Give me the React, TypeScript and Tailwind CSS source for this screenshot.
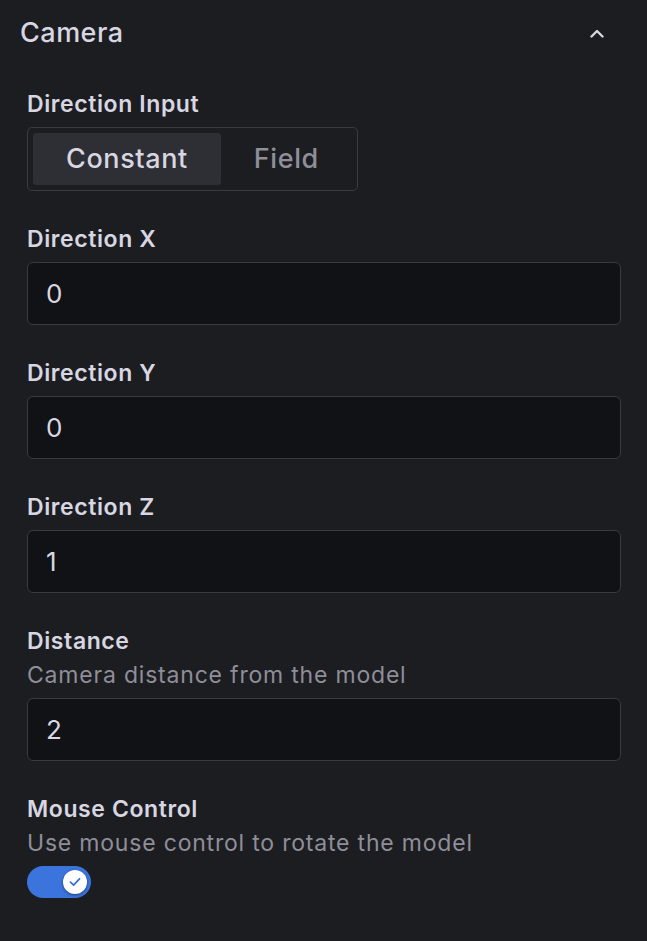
import React, { useState } from 'react';

const labelCls = "block text-[23px] leading-[30px] font-semibold tracking-[0.6px] text-[#d7d6e1]";
const descCls = "mt-1 text-[23px] leading-[30px] tracking-[0.8px] text-[#8f8e99]";

const NumberField: React.FC<{ label: string; value: string; desc?: string }> = ({ label, value, desc }) => (
  <div>
    <div className={labelCls}>{label}</div>
    {desc && <div className={descCls}>{desc}</div>}
    <div className="mt-2 h-[63px] rounded-[6px] border border-[#3a3b41] bg-[#111216] px-[18px] flex items-center">
      <span className="text-[26px] text-[#d9d8e2]">{value}</span>
    </div>
  </div>
);

const App: React.FC = () => {
  const [mode, setMode] = useState<'constant' | 'field'>('constant');
  const [mouse, setMouse] = useState(true);

  return (
    <div className="min-h-screen w-full bg-[#1c1d21] pt-[15px] pb-10" style={{ fontFamily: 'Inter, "Noto Sans", sans-serif' }}>
      <div className="flex items-center justify-between pl-[20px] pr-[43px]">
        <h2 className="text-[27px] leading-[36px] font-medium tracking-[0.5px] text-[#d7d6e1]">Camera</h2>
        <svg width="14" height="9" viewBox="0 0 14 9" fill="none">
          <path d="M1.5 7.5 L7 2 L12.5 7.5" stroke="#d7d6e1" strokeWidth="2.4" strokeLinecap="round" strokeLinejoin="round" />
        </svg>
      </div>

      <div className="mt-[38px] pl-[27px] pr-[26px] flex flex-col gap-[33px]">
        <div>
          <div className={labelCls}>Direction Input</div>
          <div className="mt-2 inline-flex rounded-[5px] border border-[#3a3b41] p-[5px]">
            <button
              onClick={() => setMode('constant')}
              className={`h-[52px] px-[33px] rounded-[3px] text-[27px] font-medium tracking-[0.6px] ${mode === 'constant' ? 'bg-[#2e2f35] text-[#d7d6e1]' : 'text-[#8f8e99]'}`}
            >
              Constant
            </button>
            <button
              onClick={() => setMode('field')}
              className={`h-[52px] px-[33px] rounded-[3px] text-[27px] font-medium tracking-[0.6px] ${mode === 'field' ? 'bg-[#2e2f35] text-[#d7d6e1]' : 'text-[#8f8e99]'}`}
            >
              Field
            </button>
          </div>
        </div>

        <NumberField label="Direction X" value="0" />
        <NumberField label="Direction Y" value="0" />
        <NumberField label="Direction Z" value="1" />
        <NumberField label="Distance" desc="Camera distance from the model" value="2" />

        <div>
          <div className={labelCls}>Mouse Control</div>
          <div className={descCls}>Use mouse control to rotate the model</div>
          <button
            onClick={() => setMouse(!mouse)}
            className={`mt-2 relative block h-[32px] w-[64px] rounded-full ${mouse ? 'bg-[#3b74dc]' : 'bg-[#3a3b41]'}`}
          >
            <span
              className={`absolute top-[4px] h-[24px] w-[24px] rounded-full bg-white shadow-[0_1px_3px_rgba(0,0,0,0.45)] flex items-center justify-center ${mouse ? 'right-[4px]' : 'left-[4px]'}`}
            >
              {mouse && (
                <svg width="14" height="14" viewBox="0 0 14 14" fill="none">
                  <path d="M2.5 7.2 L5.6 10.2 L11.5 3.8" stroke="#3b74dc" strokeWidth="1.8" strokeLinecap="round" strokeLinejoin="round" />
                </svg>
              )}
            </span>
          </button>
        </div>
      </div>
    </div>
  );
};

export default App;
